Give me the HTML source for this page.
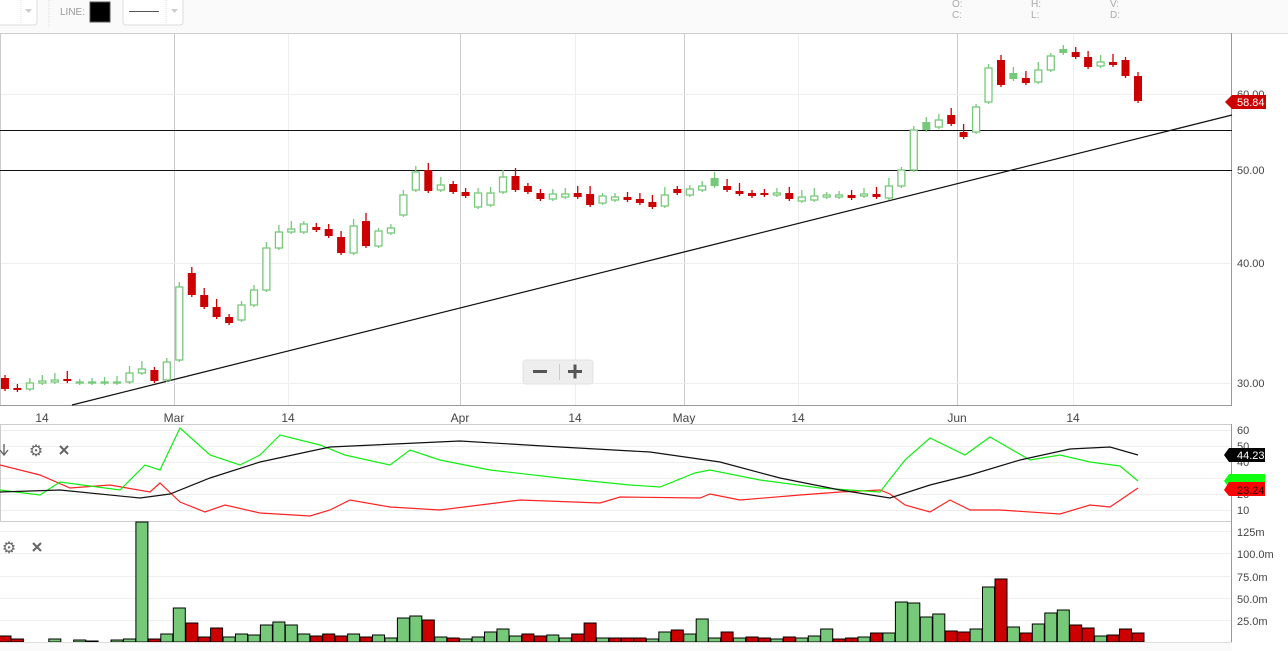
<!DOCTYPE html>
<html><head><meta charset="utf-8"><style>
body{margin:0;width:1288px;height:651px;overflow:hidden;background:#fff;font-family:"Liberation Sans",sans-serif;}
svg{position:absolute;left:0;top:0}
</style></head><body>
<svg id="s" width="1288" height="651" xmlns="http://www.w3.org/2000/svg" font-family="Liberation Sans, sans-serif">
<rect x="0" y="0" width="1288" height="33" fill="#fafafa"/>
<line x1="0" y1="33.5" x2="1288" y2="33.5" stroke="#ddd"/>
<rect x="-5" y="-5" width="42" height="30" rx="3" fill="#fff" stroke="#ddd"/>
<line x1="21" y1="0" x2="21" y2="24" stroke="#ddd" stroke-dasharray="1,1"/>
<path d="M25 9 L32 9 L28.5 13Z" fill="#ccc"/>
<line x1="49" y1="0" x2="49" y2="28" stroke="#ddd" stroke-dasharray="1,1"/>
<text x="60" y="15" font-size="10" fill="#999">LINE:</text>
<rect x="90" y="2" width="20" height="20" fill="#000" stroke="#555"/>
<rect x="123" y="-5" width="60" height="30" rx="3" fill="#fff" stroke="#ddd"/>
<line x1="129" y1="11.5" x2="159" y2="11.5" stroke="#555"/>
<line x1="166" y1="0" x2="166" y2="24" stroke="#ddd" stroke-dasharray="1,1"/>
<path d="M171 9 L178 9 L174.5 13Z" fill="#ccc"/>
<g font-size="10" fill="#aaa"><text x="952" y="7">O:</text><text x="952" y="18">C:</text><text x="1031" y="7">H:</text><text x="1031" y="18">L:</text><text x="1110" y="7">V:</text><text x="1110" y="18">D:</text></g>
<g id="grid"></g>
<rect x="0.5" y="33.5" width="1231" height="372" fill="none" stroke="#ccc"/>
<line x1="1231.5" y1="33" x2="1231.5" y2="405" stroke="#999"/>
<line x1="0" y1="405.5" x2="1232" y2="405.5" stroke="#999"/>
<line x1="0" y1="130.5" x2="1232" y2="130.5" stroke="#111"/>
<line x1="0" y1="170.5" x2="1232" y2="170.5" stroke="#111"/>
<line x1="72" y1="405" x2="1232" y2="115" stroke="#111" stroke-width="1.3"/>
<g id="candles"></g>
<g font-size="11" fill="#444"><text x="1237" y="174">50.00</text><text x="1237" y="267">40.00</text><text x="1237" y="387">30.00</text><text x="1237" y="98">60.00</text></g>
<path d="M1225 102 L1232 95 L1266 95 L1266 109 L1232 109Z" fill="#c00"/>
<text x="1237" y="106" font-size="11" fill="#fff">58.84</text>
<g font-size="12" fill="#444" text-anchor="middle"><text x="42" y="422">14</text><text x="174" y="422">Mar</text><text x="288" y="422">14</text><text x="460" y="422">Apr</text><text x="575" y="422">14</text><text x="684" y="422">May</text><text x="798" y="422">14</text><text x="957" y="422">Jun</text><text x="1073" y="422">14</text></g>
<rect x="523" y="360" width="70" height="24" rx="3" fill="#eee" stroke="#e2e2e2"/>
<line x1="559.5" y1="364" x2="559.5" y2="380" stroke="#ccc"/>
<rect x="533" y="370" width="14" height="3" fill="#555"/>
<rect x="568" y="370" width="14" height="3" fill="#555"/><rect x="573.5" y="364.5" width="3" height="14" fill="#555"/>
<rect x="0.5" y="424.5" width="1231" height="97" fill="none" stroke="#ccc"/>
<line x1="1231.5" y1="424" x2="1231.5" y2="651" stroke="#999"/>
<g id="ind"></g>
<g font-size="11" fill="#444"><text x="1237" y="434">60</text><text x="1237" y="450">50</text><text x="1237" y="466">40</text><text x="1237" y="482">30</text><text x="1237" y="498">20</text><text x="1237" y="514">10</text></g>
<path d="M1224 455 L1229 448 L1265 448 L1265 462 L1229 462Z" fill="#000"/><text x="1237" y="459" font-size="11" fill="#fff">44.23</text>
<path d="M1224 481 L1229 474 L1265 474 L1265 488 L1229 488Z" fill="#1f1"/>
<path d="M1224 490 L1229 482 L1265 482 L1265 496 L1229 496Z" fill="#f00"/><text x="1237" y="494" font-size="11" fill="#200">23.24</text>
<g stroke="#666" stroke-width="1.4" fill="none"><path d="M4 444 L4 455 M0 450 L4 455 L8 450"/></g>
<text x="36" y="456" font-size="16" fill="#666" text-anchor="middle">⚙</text>
<path d="M60 446 L68 454 M68 446 L60 454" stroke="#666" stroke-width="2"/>
<text x="9" y="553" font-size="16" fill="#666" text-anchor="middle">⚙</text>
<path d="M33 543 L41 551 M41 543 L33 551" stroke="#666" stroke-width="2"/>
<g font-size="11" fill="#444"><text x="1237" y="536">125m</text><text x="1237" y="558">100.0m</text><text x="1237" y="581">75.0m</text><text x="1237" y="603">50.0m</text><text x="1237" y="625">25.0m</text></g>
<g id="vol"></g>
<rect x="0" y="642" width="1232" height="9" fill="#fafafa"/>
<line x1="0" y1="642.5" x2="1232" y2="642.5" stroke="#ddd"/>
</svg>
<script>
var NS="http://www.w3.org/2000/svg";
function add(g,tag,a){var e=document.createElementNS(NS,tag);for(var k in a)e.setAttribute(k,a[k]);document.getElementById(g).appendChild(e);}
[174,460,684,957].forEach(function(x){add('grid','line',{x1:x+.5,y1:33,x2:x+.5,y2:405,stroke:'#ccc'});});
[288,575,798,1073].forEach(function(x){add('grid','line',{x1:x+.5,y1:33,x2:x+.5,y2:405,stroke:'#eee'});});
[94,170,263,383].forEach(function(y){add('grid','line',{x1:0,y1:y+.5,x2:1232,y2:y+.5,stroke:'#eee'});});
[430,446,462,478,494,510].forEach(function(y){add('grid','line',{x1:0,y1:y+.5,x2:1232,y2:y+.5,stroke:'#eee'});});
[531,553,576,598,620].forEach(function(y){add('grid','line',{x1:0,y1:y+.5,x2:1232,y2:y+.5,stroke:'#eee'});});
var C="r378-389 r388-390 g383-389 g381-383 g380-382 r379-381 g382-383 g382-383 g382-383 g382-383 g373-382 g369-373 r370-381 g362-380 g287-360 r273-295 r295-307 r307-317 r317-323 g305-320 g290-305 g248-290 g232-248 g229-232 g224-232 r227-230 r229-236 r237-253 g226-253 r221-246 g231-246 g228-233 g195-215 g172-190 r170-191 g185-190 r184-192 r192-196 g193-207 g193-205 g177-192 r176-190 r186-192 r193-199 g194-199 g194-197 r193-197 r194-205 g196-203 g197-200 r197-200 r199-203 r202-207 g195-206 r189-193 g189-195 g186-190 G178-186 r186-190 r191-194 r193-196 r193-195 g193-195 r193-199 g197-201 g196-200 g195-197 g195-197 r195-198 g194-196 r194-197 g186-198 g170-186 g130-170 G122-130 g120-127 r115-124 r132-137 g107-132 g68-102 r60-85 G73-79 r78-83 g70-82 g56-70 G49-53 r52-57 r57-67 g62-66 r62-65 r60-76 r76-101".split(' ');
C.forEach(function(s,i){var x=5+i*12.45;var t=s[0];var p=s.slice(1).split('-');var a=+p[0],b=+p[1];var h=b-a;var wt=a-(3+((i*7)%6)),wb=b+(2+((i*5)%5));
var col=t=='r'?'#c00':'#77c97a';
add('candles','line',{x1:x.toFixed(1),y1:wt,x2:x.toFixed(1),y2:wb,stroke:col,'stroke-width':1.3});
if(t=='g')add('candles','rect',{x:(x-3.5).toFixed(1),y:a,width:7,height:Math.max(h,1),fill:'#fff',stroke:col,'stroke-width':1.3});
else add('candles','rect',{x:(x-4).toFixed(1),y:a,width:8,height:Math.max(h,2),fill:t=='G'?'#77c97a':col});});
var V="r6 r3 g0 g0 g3 g0 g2 g1 g0 g2 g3 g120 r3 g8 g34 r19 r5 r14 g5 g8 g7 g17 g20 g17 g8 r6 r8 r6 g8 r5 g7 g4 g24 g26 r22 g5 r4 g3 g5 g10 g13 g6 r8 r6 g7 g4 r8 r19 g4 r4 r4 r4 g3 g10 r12 g8 g23 g4 r10 g4 r5 r4 g3 r5 g4 g6 g13 r3 r4 g5 r9 g9 g40 g39 g25 g28 r11 r10 g13 g55 r63 g15 r9 g18 g29 g32 r17 r14 g6 r7 r13 r9".split(' ');
V.forEach(function(s,i){var h=+s.slice(1);if(!h)return;var x=5+i*12.45;add('vol','rect',{x:(x-6).toFixed(1),y:642-h,width:12,height:h,fill:s[0]=='r'?'#c00':'#77c97a',stroke:'#000','stroke-width':1});});
function pl(pts,col){add('ind','polyline',{points:pts,fill:'none',stroke:col,'stroke-width':1.2});}
pl("0,465 40,475 70,488 110,485 150,492 160,483 180,502 205,512 225,505 260,513 310,516 330,510 350,500 390,507 440,510 480,505 520,500 600,503 620,497 700,498 710,494 740,500 800,495 840,492 880,490 890,494 905,505 930,512 950,500 970,510 1000,510 1060,514 1090,505 1110,507 1138,488","#f22");
pl("0,490 40,495 60,482 120,490 145,465 160,470 180,428 210,455 240,465 260,455 280,435 320,445 345,455 390,465 410,450 440,460 490,470 560,478 630,485 660,487 695,473 710,470 760,480 820,488 880,492 905,460 930,438 965,455 990,437 1030,460 1060,455 1090,462 1120,466 1138,481","#1e1");
pl("0,492 60,490 140,498 170,494 210,478 260,462 330,447 460,441 560,447 650,452 720,462 780,478 840,490 890,498 930,485 970,475 1020,460 1070,449 1110,447 1138,455","#111");
</script>
</body></html>
